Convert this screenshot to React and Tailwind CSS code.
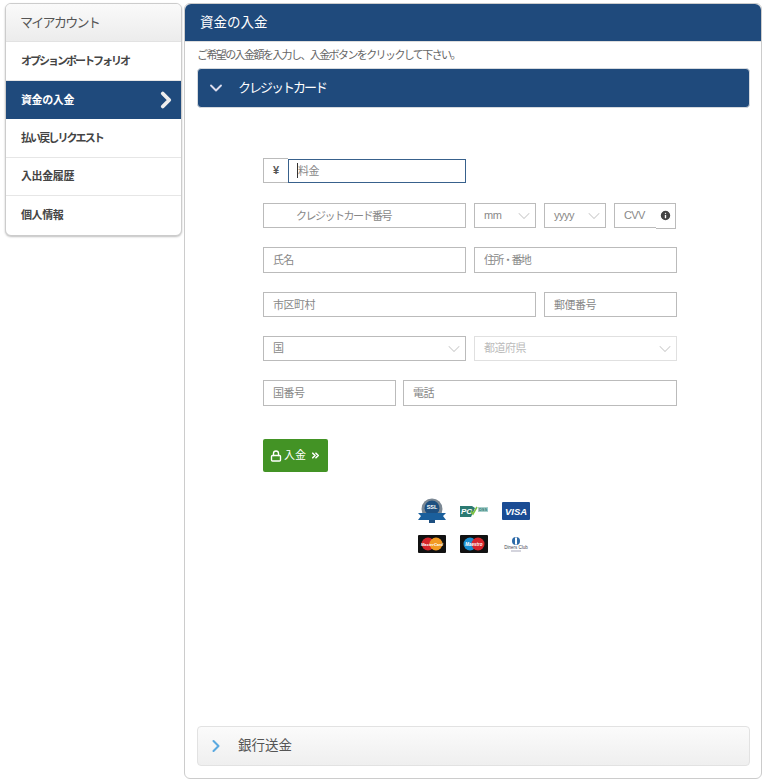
import React from 'react';
import { ChevronDown, ChevronRight, ChevronsRight, Info, Lock } from 'lucide-react';

const jp = "font-['Liberation_Sans','Noto_Sans_CJK_JP',sans-serif]";

const menu = [
    { label: 'オプションポートフォリオ', tracking: 'tracking-[-2px]' },
    { label: '資金の入金', active: true, tracking: 'tracking-[-0.4px]' },
    { label: '払い戻しリクエスト', tracking: 'tracking-[-1.9px]' },
    { label: '入出金履歴', tracking: 'tracking-[-0.4px]' },
    { label: '個人情報', tracking: 'tracking-[-0.4px]' },
];

const Field = ({ placeholder, className = '' }) => (
    <input
        type="text"
        placeholder={placeholder}
        className={`h-full border border-[#bbb] bg-white px-[9px] text-[11px] outline-none placeholder:text-[#888] ${className}`}
    />
);

const Select = ({ label, className = '', disabled = false }) => (
    <div className={`h-full flex items-center justify-between border pl-[9px] pr-px text-[11px] tracking-[-0.5px] ${disabled ? 'border-[#e0e0e0] text-[#bbb]' : 'border-[#bbb] text-[#888]'} ${className}`}>
        <span>{label}</span>
        <ChevronDown size={20} strokeWidth={1.25} className="text-[#ccc]" />
    </div>
);

const Badges = () => (
    <div className="ml-[221px] mt-[26px] grid w-[112px] grid-cols-3 gap-x-[14px] gap-y-[11px] font-['Liberation_Sans',sans-serif]">
        <svg width="28" height="26" viewBox="0 0 28 26" className="block">
            <circle cx="14" cy="11" r="10.5" fill="#7b8894" />
            <circle cx="14" cy="10" r="7.5" fill="#1d4f80" />
            <text x="14" y="11" textAnchor="middle" fontSize="5.5" fontWeight="700" fill="#fff">SSL</text>
            <path d="M0 15h28l-3 3 3 4H0l3-4z" fill="#1a5f9c" />
            <rect x="11" y="22" width="6" height="3" fill="#1d4f80" />
        </svg>
        <svg width="28" height="26" viewBox="0 0 28 26" className="block">
            <path d="M0 8h12l3 2-4 9H0z" fill="#2c7a72" />
            <text x="1" y="16" fontSize="8" fontWeight="700" fontStyle="italic" fill="#fff">PC</text>
            <path d="M11 13l2 3 4-7" fill="none" stroke="#7cc242" strokeWidth="1.6" />
            <rect x="18" y="9" width="10" height="5" fill="#a9cfca" />
            <text x="23" y="13" textAnchor="middle" fontSize="4" fontWeight="700" fill="#2c7a72">DSS</text>
        </svg>
        <svg width="28" height="26" viewBox="0 0 28 26" className="block">
            <rect x="0" y="4" width="28" height="18" rx="1" fill="#1a4c94" />
            <text x="14" y="17" textAnchor="middle" fontSize="9.5" fontWeight="700" fontStyle="italic" fill="#fff">VISA</text>
        </svg>
        <svg width="28" height="18" viewBox="0 0 28 18" className="block">
            <rect width="28" height="18" rx="1" fill="#111" />
            <circle cx="10" cy="9" r="6.5" fill="#d6252b" />
            <circle cx="18" cy="9" r="6.5" fill="#f29a22" />
            <text x="14" y="10.5" textAnchor="middle" fontSize="4" fontWeight="700" fontStyle="italic" fill="#fff">MasterCard</text>
        </svg>
        <svg width="28" height="18" viewBox="0 0 28 18" className="block">
            <rect width="28" height="18" rx="1" fill="#111" />
            <circle cx="10" cy="9" r="6.5" fill="#1a8fd1" />
            <circle cx="18" cy="9" r="6.5" fill="#d6252b" />
            <text x="14" y="10.5" textAnchor="middle" fontSize="4.5" fontWeight="700" fontStyle="italic" fill="#fff">Maestro</text>
        </svg>
        <svg width="28" height="18" viewBox="0 0 28 18" className="block">
            <circle cx="14" cy="6" r="4" fill="#2d6aa8" />
            <rect x="13" y="2.5" width="2" height="7" fill="#fff" />
            <text x="14" y="14" textAnchor="middle" fontSize="4.5" fill="#445">Diners Club</text>
            <rect x="9" y="15.5" width="10" height="1" fill="#aab" />
        </svg>
    </div>
);

const App = () => {
    return (
        <div className={`flex h-[783px] w-[768px] gap-[2px] bg-white pl-[5px] pt-[3px] text-[#555] ${jp}`}>
            <aside className="h-fit w-[177px] overflow-hidden rounded-md border border-[#ccc] bg-white shadow-[0_1px_2px_rgba(0,0,0,0.25)]">
                <div className="flex h-[38px] items-center border-b border-[#e2e2e2] bg-gradient-to-b from-[#fafafa] to-[#ececec] pl-[14px] text-[13px] tracking-[-1.7px] text-[#555]">
                    マイアカウント
                </div>
                {menu.map((item) => (
                    <div
                        key={item.label}
                        className={`flex h-[38.6px] items-center justify-between pl-[15px] pr-[2px] text-[11px] font-bold ${item.active ? 'bg-[#1f4a7c] text-white' : 'border-b border-[#e6e6e6] text-[#444] last:border-b-0'}`}
                    >
                        <span className={item.tracking}>{item.label}</span>
                        {item.active && <ChevronRight size={26} strokeWidth={3.5} className="text-[#eee]" />}
                    </div>
                ))}
            </aside>

            <main className="flex h-[776px] w-[578px] flex-col rounded-md border border-[#ccc] bg-white px-3 pb-3">
                <div className="-mx-3 flex h-[38px] items-center rounded-t-md border-b border-[#ddd] bg-[#1f4a7c] pl-[15px] text-[13.5px] text-white">
                    <span className="mt-px">資金の入金</span>
                </div>
                <p className="mt-[6px] h-[20px] text-[11px] leading-[14px] tracking-[-1.6px] text-[#666]">
                    ご希望の入金額を入力し、入金ボタンをクリックして下さい。
                </p>
                <div className="-mr-px flex h-[40px] items-center rounded-[4px] border border-[#d5d9de] bg-[#1f4a7c] pl-[8px] text-[13px] text-white">
                    <ChevronDown size={20} strokeWidth={2.25} className="text-[#dde]" />
                    <span className="ml-[12px] tracking-[-2px]">クレジットカード</span>
                </div>

                <form className="mt-[50px] w-[414px] ml-[66px] flex flex-col" onSubmit={(e) => e.preventDefault()}>
                    <div className="flex h-[25px]">
                        <div className="flex w-[25px] items-center justify-center border border-r-0 border-[#bbb] text-[11px] font-bold text-[#555]">¥</div>
                        <div className="relative w-[178px]">
                            <input
                                type="text"
                                placeholder="料金"
                                className="h-[24px] w-full border border-[#38618c] pl-[9px] text-[11px] tracking-[-0.5px] outline-none placeholder:text-[#888]"
                            />
                            <span className="absolute left-[9px] top-[5px] h-[15px] w-px bg-[#333]" />
                        </div>
                    </div>

                    <div className="mt-[20px] flex h-[25px] gap-2">
                        <Field placeholder="クレジットカード番号" className="w-[203px] pl-[32px] tracking-[-1.5px]" />
                        <Select label="mm" className="w-[62px]" />
                        <Select label="yyyy" className="w-[62px]" />
                        <div className="flex w-[62px] items-start text-[11px] text-[#888]">
                            <div className="flex h-[25px] w-[42px] items-center border border-r-0 border-[#bbb] pl-[9px] tracking-[-0.6px]">CVV</div>
                            <div className="flex h-[26px] w-[20px] items-center justify-center border border-l-0 border-[#bbb] pb-[1px]">
                                <Info size={13} strokeWidth={2.5} fill="#444" className="text-white" />
                            </div>
                        </div>
                    </div>

                    <div className="mt-[19px] flex h-[26px] gap-2">
                        <Field placeholder="氏名" className="w-[203px] tracking-[-0.8px]" />
                        <Field placeholder="住所・番地" className="w-[203px] tracking-[-1.8px]" />
                    </div>

                    <div className="mt-[19px] flex h-[25px] gap-2">
                        <Field placeholder="市区町村" className="w-[273px] tracking-[-0.5px]" />
                        <Field placeholder="郵便番号" className="w-[133px] tracking-[-0.5px]" />
                    </div>

                    <div className="mt-[19px] flex h-[25px] gap-2">
                        <Select label="国" className="w-[203px]" />
                        <Select label="都道府県" className="w-[203px]" disabled />
                    </div>

                    <div className="mt-[19px] flex h-[26px] gap-[7px]">
                        <Field placeholder="国番号" className="w-[133px] tracking-[-0.5px]" />
                        <Field placeholder="電話" className="w-[274px] tracking-[-0.5px]" />
                    </div>

                    <button
                        type="submit"
                        className="mt-[33px] flex h-[33px] w-[65px] items-center justify-center gap-[2px] rounded-[2px] bg-[#439325] text-[11px] text-white"
                    >
                        <Lock size={12} strokeWidth={2.75} />
                        <span>入金</span>
                        <ChevronsRight size={11} strokeWidth={3.5} className="ml-[2px]" />
                    </button>
                </form>

                <Badges />

                <div className="-mr-px mt-auto flex h-[40px] items-center rounded-[4px] border border-[#e2e2e2] bg-gradient-to-b from-[#fbfbfb] to-[#efefef] pl-[8px] text-[13.5px] text-[#555]">
                    <ChevronRight size={20} strokeWidth={2.5} className="text-[#5aa9e0]" />
                    <span className="ml-[12px] mt-px">銀行送金</span>
                </div>
            </main>
        </div>
    );
};

export default App;
